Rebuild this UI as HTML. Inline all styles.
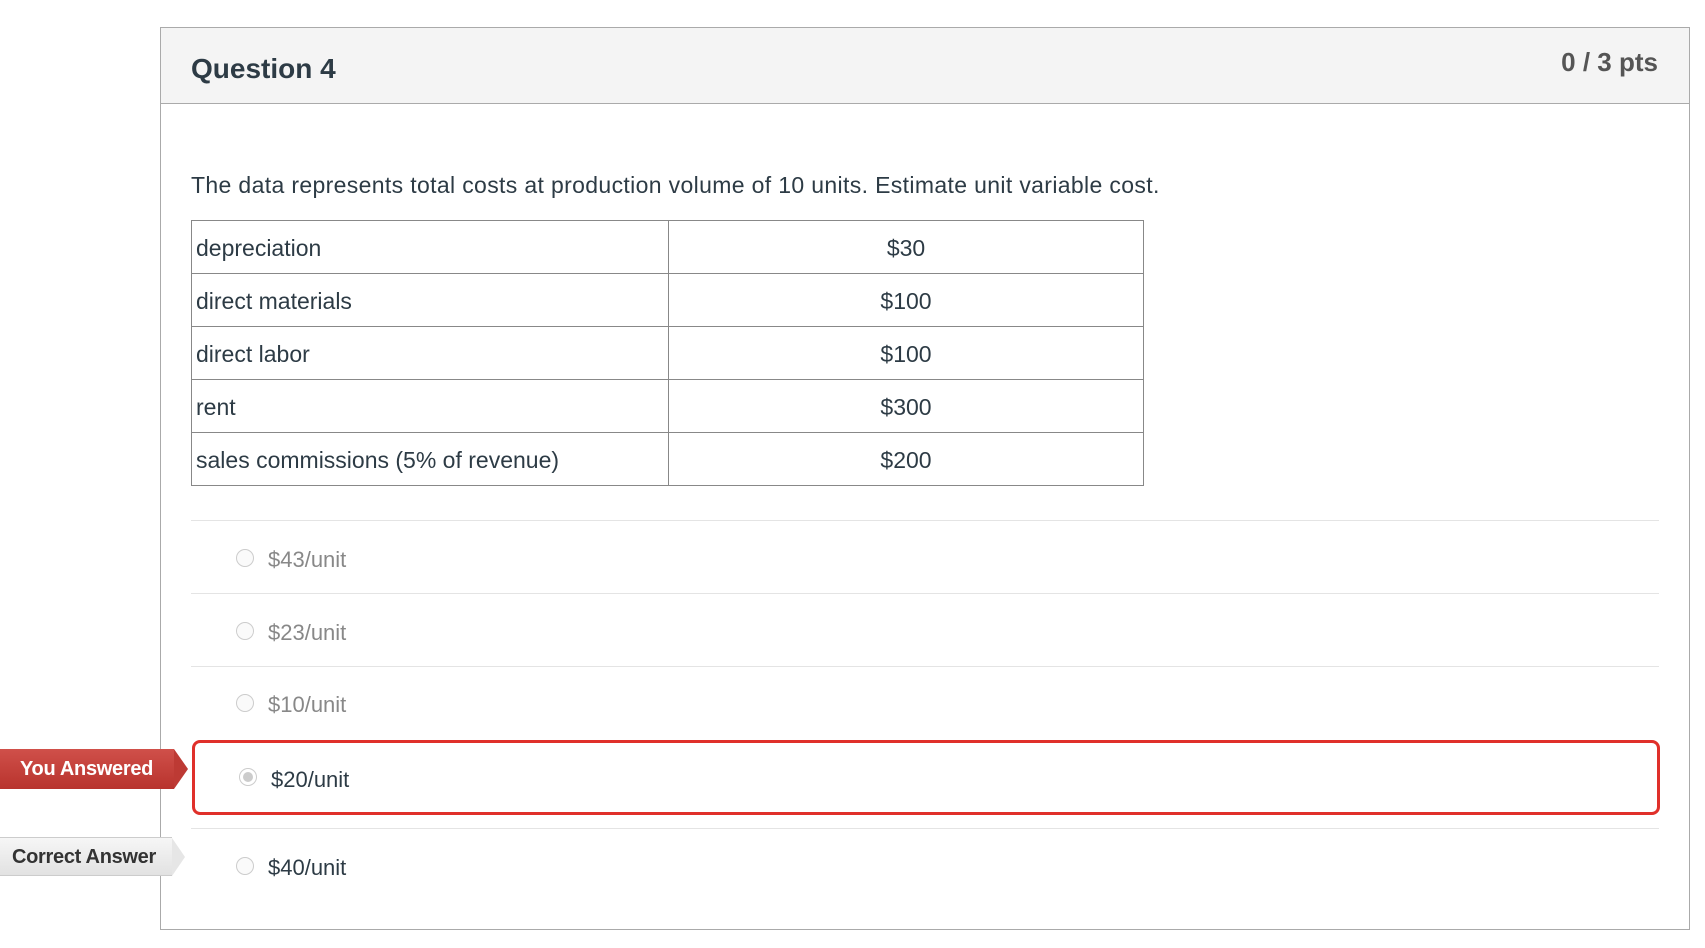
<!DOCTYPE html>
<html><head><meta charset="utf-8"><style>
body{margin:0;width:1705px;height:948px;background:#fff;font-family:"Liberation Sans",sans-serif;color:#2d3b45;position:relative;overflow:hidden}
.abs{position:absolute}
.box{left:160px;top:27px;width:1530px;height:903px;border:1px solid #aaa;box-sizing:border-box}
.hdr{left:161px;top:28px;width:1528px;height:75px;background:#f4f4f4;border-bottom:1px solid #aaa}
.title{left:191px;top:53px;font-size:28px;font-weight:bold;color:#2d3b45}
.pts{right:47px;top:47px;font-size:26px;font-weight:bold;color:#555}
.q{left:191px;top:172px;font-size:23px;letter-spacing:0.35px;color:#2d3b45}
table{position:absolute;left:191px;top:220px;width:953px;border-collapse:collapse;font-size:23px;color:#2d3b45}
td{border:1px solid #888;height:53px;padding:2px 4px 0;box-sizing:border-box}
td.r{text-align:center;width:475px}
.sep{left:191px;width:1468px;height:1px;background:#e4e4e4}
.opt{font-size:22px;color:#888}
.radio{width:18px;height:18px;border:1px solid #ccc;border-radius:50%;box-sizing:border-box;background:#fafafa}
.red{left:192px;top:740px;width:1468px;height:75px;border:3px solid #e0302a;border-radius:8px;box-sizing:border-box}
.ya{left:0;top:749px;width:174px;height:40px;background:linear-gradient(#d0504a,#b8332d);color:#fff;font-weight:bold;font-size:20px;letter-spacing:-0.3px;line-height:40px;text-indent:20px}
.ya:after{content:"";position:absolute;right:-14px;top:0;border-left:14px solid #bd3a34;border-top:20px solid transparent;border-bottom:20px solid transparent}
.ca{left:0;top:837px;width:172px;height:39px;background:linear-gradient(#f6f6f6,#e2e2e2);color:#333;font-weight:bold;font-size:20px;letter-spacing:-0.3px;line-height:39px;text-indent:12px;border-top:1px solid #ccc;border-bottom:1px solid #ccc;box-sizing:border-box}
.ca:after{content:"";position:absolute;right:-13px;top:0;border-left:13px solid #e6e6e6;border-top:19px solid transparent;border-bottom:19px solid transparent}
</style></head><body>
<div class="abs box"></div>
<div class="abs hdr"></div>
<div class="abs title">Question 4</div>
<div class="abs pts">0 / 3 pts</div>
<div class="abs q">The data represents total costs at production volume of 10 units. Estimate unit variable cost.</div>
<table>
<tr><td>depreciation</td><td class="r">$30</td></tr>
<tr><td>direct materials</td><td class="r">$100</td></tr>
<tr><td>direct labor</td><td class="r">$100</td></tr>
<tr><td>rent</td><td class="r">$300</td></tr>
<tr><td>sales commissions (5% of revenue)</td><td class="r">$200</td></tr>
</table>
<div class="abs sep" style="top:520px"></div>
<div class="abs sep" style="top:593px"></div>
<div class="abs sep" style="top:666px"></div>
<div class="abs sep" style="top:828px"></div>
<div class="abs radio" style="left:236px;top:549px"></div><div class="abs opt" style="left:268px;top:547px">$43/unit</div>
<div class="abs radio" style="left:236px;top:622px"></div><div class="abs opt" style="left:268px;top:620px">$23/unit</div>
<div class="abs radio" style="left:236px;top:694px"></div><div class="abs opt" style="left:268px;top:692px">$10/unit</div>
<div class="abs red"></div>
<div class="abs radio" style="left:239px;top:768px;border-color:#ccc;background:#fff"><div style="width:10px;height:10px;border-radius:50%;background:#ccc;margin:3px"></div></div>
<div class="abs opt" style="left:271px;top:767px;color:#2d3b45">$20/unit</div>
<div class="abs radio" style="left:236px;top:857px"></div><div class="abs opt" style="left:268px;top:855px;color:#2d3b45">$40/unit</div>
<div class="abs ya">You Answered</div>
<div class="abs ca">Correct Answer</div>
</body></html>
